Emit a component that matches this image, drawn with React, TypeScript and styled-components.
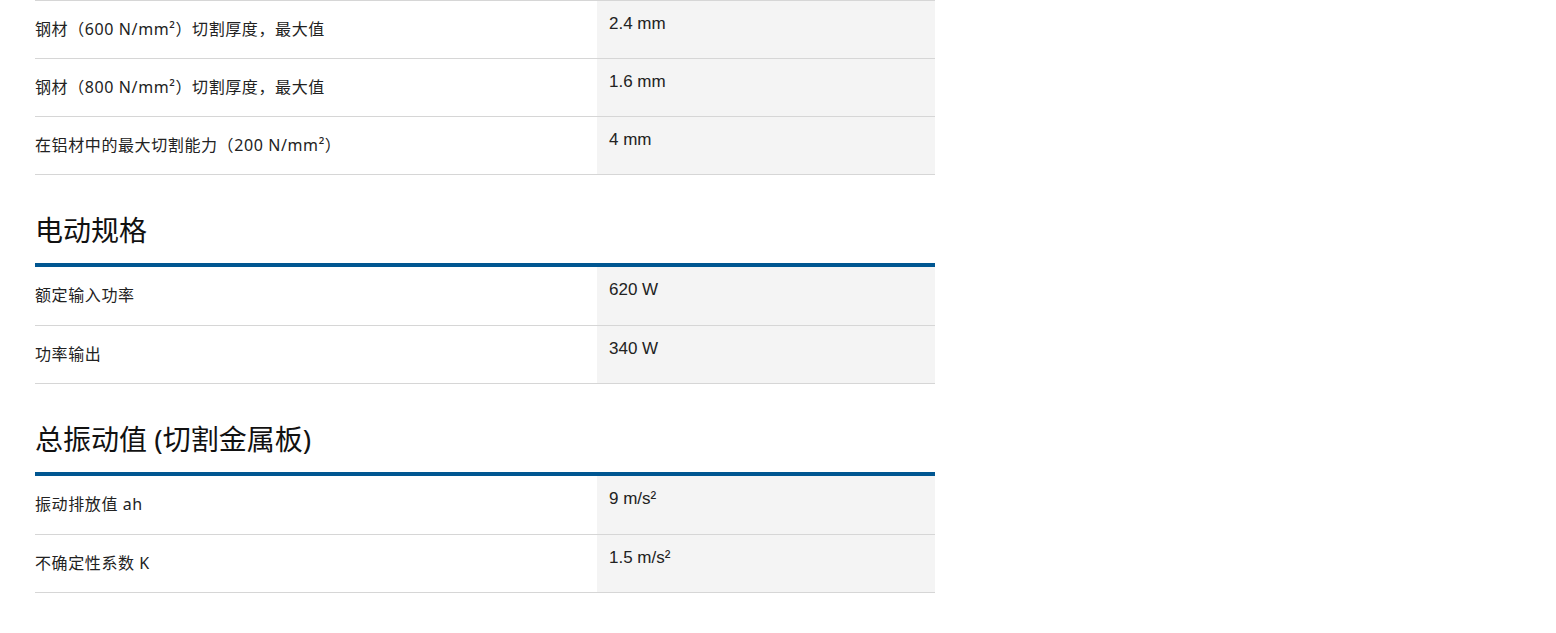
import styled, { createGlobalStyle } from "styled-components";

const GlobalStyle = createGlobalStyle`
  html, body {
    margin: 0;
    padding: 0;
    background: #ffffff;
  }
  body {
    font-family: "Liberation Sans", "Noto Sans CJK SC", sans-serif;
    color: #222;
  }
`;

type Row = { label: string; value: string };
type Section = { title?: string; rows: Row[] };

const sections: Section[] = [
  {
    rows: [
      { label: "钢材（600 N/mm²）切割厚度，最大值", value: "2.4 mm" },
      { label: "钢材（800 N/mm²）切割厚度，最大值", value: "1.6 mm" },
      { label: "在铝材中的最大切割能力（200 N/mm²）", value: "4 mm" },
    ],
  },
  {
    title: "电动规格",
    rows: [
      { label: "额定输入功率", value: "620 W" },
      { label: "功率输出", value: "340 W" },
    ],
  },
  {
    title: "总振动值 (切割金属板)",
    rows: [
      { label: "振动排放值 ah", value: "9 m/s²" },
      { label: "不确定性系数 K", value: "1.5 m/s²" },
    ],
  },
];

const App = () => {
  return (
    <>
      <GlobalStyle />
      <Page>
        {sections.map((section, i) => (
          <SpecSection key={i}>
            {section.title && (
              <>
                <Heading>{section.title}</Heading>
                <Rule />
              </>
            )}
            <Table titled={!!section.title}>
              {section.rows.map((row) => (
                <TableRow key={row.label}>
                  <Label>{row.label}</Label>
                  <Value>{row.value}</Value>
                </TableRow>
              ))}
            </Table>
          </SpecSection>
        ))}
      </Page>
    </>
  );
};

const Page = styled.div`
  width: 900px;
  padding: 0 0 40px 35px;
`;

const SpecSection = styled.section`
  & + & {
    margin-top: 38px;
  }
`;

const Heading = styled.h2`
  margin: 0 0 16px;
  font-family: "Noto Sans", "Noto Sans CJK SC", sans-serif;
  font-weight: 400;
  font-size: 28px;
  line-height: 34px;
  color: #111;
`;

const Rule = styled.div`
  height: 4px;
  background: #005691;
`;

const TableRow = styled.div`
  display: grid;
  grid-template-columns: 562px 338px;
  height: 58px;
`;

const Table = styled.div<{ titled: boolean }>`
  display: flex;
  flex-direction: column;
  border-top: ${({ titled }) => (titled ? "none" : "1px solid #d6d6d6")};

  ${TableRow}:first-child {
    height: ${({ titled }) => (titled ? "59px" : "58px")};
  }
`;

const Label = styled.div`
  display: flex;
  align-items: center;
  padding-bottom: 4px;
  font-family: "Noto Sans", "Noto Sans CJK SC", sans-serif;
  font-size: 16px;
  letter-spacing: 0.6px;
  color: #222;
  border-bottom: 1px solid #d6d6d6;
`;

const Value = styled.div`
  padding: 11px 12px 0;
  background: #f4f4f4;
  font-size: 17px;
  line-height: 24px;
  color: #222;
  border-bottom: 1px solid #d6d6d6;
`;

export default App;
